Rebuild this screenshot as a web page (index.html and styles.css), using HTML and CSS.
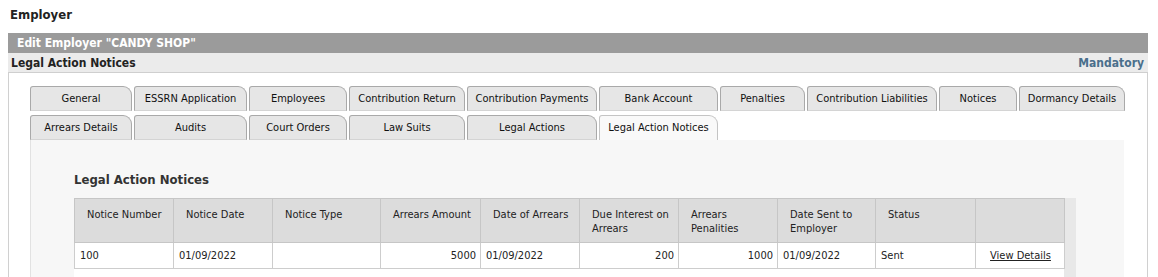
FILE: index.html
```html
<!DOCTYPE html>
<html lang="en">
<head>
    <meta charset="UTF-8">
    <title>Employer - Legal Action Notices</title>
    <link rel="stylesheet" href="styles.css">
</head>
<body>
    <div class="page-title">Employer</div>

    <div class="panel">
        <div class="panel-header">Edit Employer "CANDY SHOP"</div>
        <div class="panel-subheader">
            <span>Legal Action Notices</span>
            <span class="mandatory">Mandatory</span>
        </div>

        <div class="panel-body">
            <div class="tabs">
                <div class="tab">General</div>
                <div class="tab">ESSRN Application</div>
                <div class="tab">Employees</div>
                <div class="tab">Contribution Return</div>
                <div class="tab">Contribution Payments</div>
                <div class="tab">Bank Account</div>
                <div class="tab">Penalties</div>
                <div class="tab">Contribution Liabilities</div>
                <div class="tab">Notices</div>
                <div class="tab">Dormancy Details</div>
                <div class="tab">Arrears Details</div>
                <div class="tab">Audits</div>
                <div class="tab">Court Orders</div>
                <div class="tab">Law Suits</div>
                <div class="tab">Legal Actions</div>
                <div class="tab active">Legal Action Notices</div>
            </div>

            <div class="tab-content">
                <h3>Legal Action Notices</h3>
                <div class="grid-wrap">
                    <div class="grid-inner">
                        <table class="grid">
                            <colgroup>
                                <col style="width:99px">
                                <col style="width:99px">
                                <col style="width:108px">
                                <col style="width:100px">
                                <col style="width:99px">
                                <col style="width:99px">
                                <col style="width:99px">
                                <col style="width:98px">
                                <col style="width:100px">
                                <col style="width:89px">
                            </colgroup>
                            <thead>
                                <tr>
                                    <th>Notice Number</th>
                                    <th>Notice Date</th>
                                    <th>Notice Type</th>
                                    <th>Arrears Amount</th>
                                    <th>Date of Arrears</th>
                                    <th>Due Interest on Arrears</th>
                                    <th>Arrears Penalities</th>
                                    <th>Date Sent to Employer</th>
                                    <th>Status</th>
                                    <th></th>
                                </tr>
                            </thead>
                            <tbody>
                                <tr>
                                    <td>100</td>
                                    <td>01/09/2022</td>
                                    <td></td>
                                    <td class="num">5000</td>
                                    <td>01/09/2022</td>
                                    <td class="num">200</td>
                                    <td class="num">1000</td>
                                    <td>01/09/2022</td>
                                    <td>Sent</td>
                                    <td class="center"><a href="#">View Details</a></td>
                                </tr>
                            </tbody>
                        </table>
                    </div>
                </div>
            </div>
        </div>
    </div>
</body>
</html>
```

FILE: styles.css
```css
* {
    box-sizing: border-box;
    font-family: "DejaVu Sans Condensed", "DejaVu Sans", sans-serif;
}

body {
    margin: 8px 8px 0;
    background: #ffffff;
    color: #222;
    font-size: 11px;
}

.page-title {
    font-size: 13px;
    font-weight: bold;
    line-height: 14px;
    padding-left: 2px;
    margin-bottom: 11px;
}

.panel {
    width: 1140px;
}

.panel-header {
    background: #9b9b9b;
    color: #ffffff;
    font-size: 12px;
    font-weight: bold;
    height: 20px;
    line-height: 20px;
    padding-left: 9px;
}

.panel-subheader {
    background: #ebebeb;
    border-bottom: 1px solid #cfcfcf;
    font-size: 12px;
    font-weight: bold;
    height: 20px;
    line-height: 20px;
    padding: 0 4px 0 3px;
    display: flex;
    justify-content: space-between;
    color: #222;
}

.mandatory {
    color: #4a6f8c;
    font-size: 12px;
}

.panel-body {
    border-left: 1px solid #d0d0d0;
    border-right: 1px solid #d0d0d0;
    padding: 13px 23px 0 21px;
    height: 204px;
    overflow: hidden;
}

/* Pestañas */
.tabs {
    display: grid;
    grid-template-columns: 102px 113px 98px 116px 130px 119px 85px 130px 78px 106px;
    grid-auto-rows: 25px;
    column-gap: 2px;
    row-gap: 4px;
}

.tab {
    background: #e6e6e6;
    border: 1px solid #a9a9a9;
    border-bottom: 1px solid #d4d4d4;
    border-radius: 3px 9px 0 0;
    text-align: center;
    line-height: 23px;
    font-size: 11px;
    color: #111;
    white-space: nowrap;
    overflow: hidden;
}

.tab.active {
    background: #f9f9f9;
    border-color: #c4c4c4;
    border-bottom: none;
}

.tab-content {
    background: #f7f7f7;
    border-left: 1px solid #e2e2e2;
    padding: 32px 0 0 43px;
    height: 137px;
}

.tab-content h3 {
    margin: 0 0 10px;
    font-size: 13px;
    line-height: 16px;
    font-weight: bold;
    color: #333;
}

.grid-wrap {
    width: 1002px;
    background: #e8e8e8;
    height: 79px;
}

.grid-inner {
    width: 990px;
    background: #ffffff;
    height: 79px;
}

.grid {
    border-collapse: collapse;
    table-layout: fixed;
    width: 990px;
}

.grid th {
    background: #dcdcdc;
    border: 1px solid #c6c6c6;
    height: 44px;
    padding: 9px 6px 0 12px;
    vertical-align: top;
    text-align: left;
    font-weight: normal;
    font-size: 11px;
    line-height: 14px;
    color: #222;
}

.grid td {
    border: 1px solid #cdcdcd;
    height: 26px;
    padding: 0 4px 0 5px;
    font-size: 11px;
    color: #222;
}

.grid td.num {
    text-align: right;
}

.grid td.center {
    text-align: center;
}

.grid a {
    color: #222;
    text-decoration: underline;
}
```
